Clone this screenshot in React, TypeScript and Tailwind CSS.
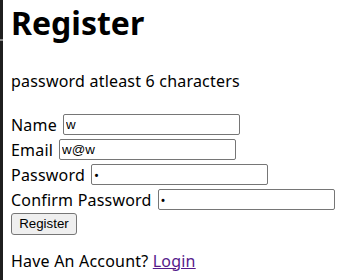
const inputCls =
  "h-[21px] w-[177px] rounded-[2px] border border-[#767676] bg-white px-[2px] text-[13.33px] tracking-normal text-black outline-none";

function Row({ label, children }: { label: string; children: React.ReactNode }) {
  return (
    <div className="flex h-[25px] items-center gap-[6px]">
      <label>{label}</label>
      {children}
    </div>
  );
}

export default function App() {
  return (
    <div className="flex h-[280px] w-[362px] overflow-hidden bg-white">
      {/* editor gutter strip */}
      <div className="flex w-[3px] shrink-0 flex-col bg-[#1f1f1f]">
        <div className="h-[39px]" />
        <div className="h-[2px] bg-[#8a8a8a]" />
      </div>
      <div className="pl-[8px] font-['Noto_Sans',sans-serif] text-[16px] leading-[20px] tracking-[0.2px] text-black">
        <h1 className="pt-[7px] text-[32px] leading-[32px] font-bold tracking-normal">Register</h1>
        <p className="mt-[32px]">password atleast 6 characters</p>
        <form className="mt-[21px]" onSubmit={(e) => e.preventDefault()}>
          <Row label="Name">
            <input className={inputCls} style={{ fontFamily: "'Liberation Sans', Arial, sans-serif" }} defaultValue="w" />
          </Row>
          <Row label="Email">
            <input className={inputCls} style={{ fontFamily: "'Liberation Sans', Arial, sans-serif" }} defaultValue="w@w" />
          </Row>
          <Row label="Password">
            <input type="password" className={inputCls} defaultValue="w" />
          </Row>
          <Row label="Confirm Password">
            <input type="password" className={inputCls} defaultValue="w" />
          </Row>
          <button
            type="submit"
            className="-mt-[1px] h-[22px] w-[66px] rounded-[3px] border border-[#767676] bg-[#efefef] font-['Liberation_Sans',Arial,sans-serif] text-[13.33px] leading-none tracking-normal text-black"
          >
            Register
          </button>
        </form>
        <p className="mt-[16px]">
          Have An Account?{" "}
          <a href="#" className="text-[#551a8b] underline">
            Login
          </a>
        </p>
      </div>
    </div>
  );
}
